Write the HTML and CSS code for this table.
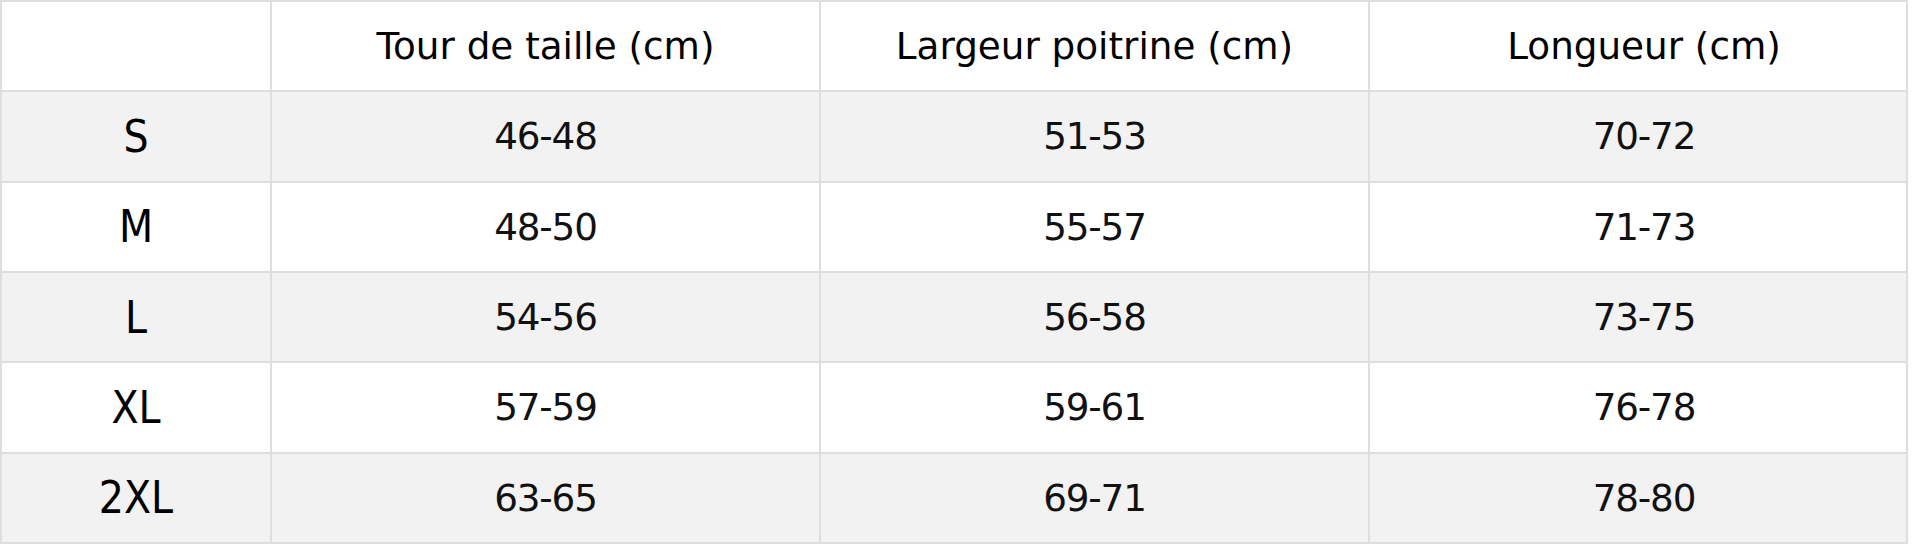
FILE: index.html
```html
<!DOCTYPE html>
<html lang="fr">
<head>
<meta charset="utf-8">
<title>Guide des tailles</title>
<link rel="stylesheet" href="styles.css">
</head>
<body>
<table class="size-table">
  <colgroup>
    <col class="c-size">
    <col class="c-mid">
    <col class="c-mid">
    <col class="c-last">
  </colgroup>
  <thead>
    <tr>
      <th></th>
      <th>Tour de taille (cm)</th>
      <th>Largeur poitrine (cm)</th>
      <th class="last">Longueur (cm)</th>
    </tr>
  </thead>
  <tbody>
    <tr><td class="lbl">S</td><td>46-48</td><td>51-53</td><td class="last">70-72</td></tr>
    <tr><td class="lbl">M</td><td>48-50</td><td>55-57</td><td class="last">71-73</td></tr>
    <tr><td class="lbl">L</td><td>54-56</td><td>56-58</td><td class="last">73-75</td></tr>
    <tr><td class="lbl">XL</td><td>57-59</td><td>59-61</td><td class="last">76-78</td></tr>
    <tr><td class="lbl">2XL</td><td>63-65</td><td>69-71</td><td class="last">78-80</td></tr>
  </tbody>
</table>
</body>
</html>
```
FILE: styles.css
```css
html, body {
  margin: 0;
  padding: 0;
  background: #ffffff;
}

.size-table {
  width: 1908px;
  table-layout: fixed;
  border-collapse: separate;
  border-spacing: 0;
  border: 1px solid #dedede;
  color: #000;
}

.c-size { width: 270px; }
.c-mid { width: 549px; }
.c-last { width: 538px; }

.size-table th,
.size-table td {
  box-sizing: border-box;
  height: 90.33px;
  padding: 0;
  border: 1px solid #dedede;
  text-align: center;
  vertical-align: middle;
}

.size-table th.last,
.size-table td.last {
  padding-left: 12px;
}

.size-table th {
  font-family: "DejaVu Sans", sans-serif;
  font-weight: normal;
  font-size: 37.3px;
}

.size-table td {
  font-family: "DejaVu Sans", sans-serif;
  font-size: 37.3px;
  letter-spacing: -1.2px;
  color: #111;
}

.size-table td.lbl {
  font-family: "DejaVu Sans Condensed", "DejaVu Sans", sans-serif;
  font-size: 44px;
  letter-spacing: 0;
  color: #000;
}

.size-table tbody tr:nth-child(odd) td {
  background: #f2f2f2;
}
```
